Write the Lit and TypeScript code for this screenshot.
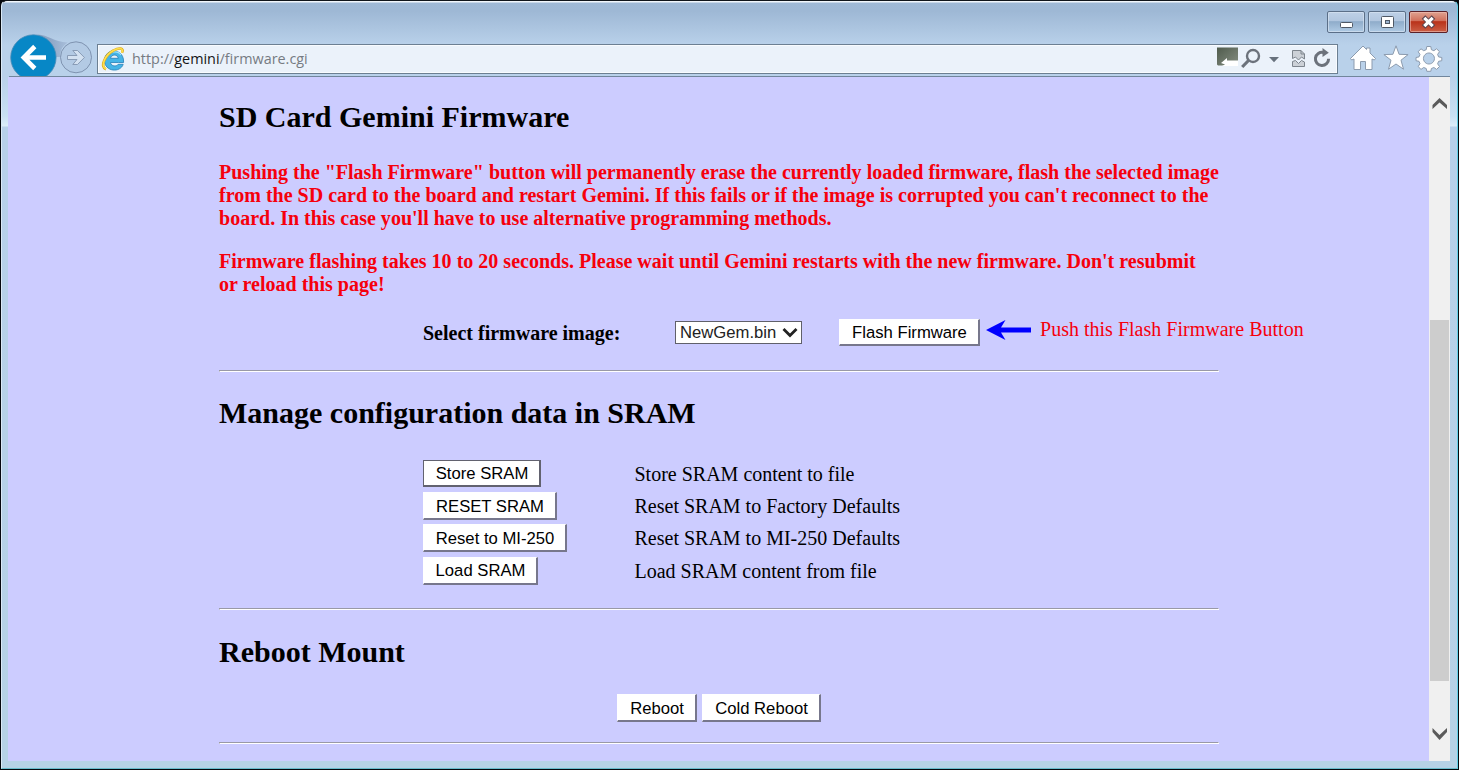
import { LitElement, html, css } from "lit";
import { customElement, property } from "lit/decorators.js";

@customElement("classic-button")
class ClassicButton extends LitElement {
  @property() label = "";
  @property({ type: Number }) width = 100;
  @property({ type: Boolean, reflect: true }) focused = false;
  @property({ type: Boolean, reflect: true }) tall = false;
  static styles = css`
    :host { display: block; height: 27px; }
    button { display: block; height: 27px; box-sizing: border-box; padding: 0 0 0 1px; margin: 0;
      font: 16.67px/23px "Liberation Sans", Arial, sans-serif; color: #000; background: #fff; border-radius: 0;
      border: 1px solid #fff; border-right: 2px solid #77778c; border-bottom: 2px solid #77778c; white-space: nowrap; }
    :host([tall]) button { height: 28px; padding-top: 1px; }
    :host([focused]) button { border-color: #62626f; }
  `;
  render() {
    return html`<button style="width:${this.width}px">${this.label}</button>`;
  }
}

@customElement("browser-chrome")
class BrowserChrome extends LitElement {
  static styles = css`
    :host { display: flex; flex-direction: column; height: 76px; box-sizing: border-box; flex: none; }
    .title { display: flex; justify-content: flex-end; height: 32px; padding: 9px 8px 0 0; box-sizing: border-box; flex: none; }
    .bar { display: flex; height: 43px; margin-left: 7px; margin-right: 7px; border-bottom: 1px solid #71869c; }
    .nav { display: block; width: 88px; height: 43px; flex: none; }
    .address { display: flex; align-items: center; width: 1241px; height: 30px; box-sizing: border-box; margin-top: 11px;
      background: #ebf2fa; border: 1px solid #6c7f92; outline: 0; flex: none; box-shadow: inset 0 0 0 1px #f8fbfe; }
    .ie { width: 24px; height: 24px; margin-left: 3px; flex: none; }
    .url { font: 14.4px/20px "Open Sans", sans-serif; color: #767b82; margin-left: 7px; flex: 1; white-space: pre; letter-spacing: 0; }
    .url b { font-weight: 400; color: #151515; }
    .tools { width: 120px; height: 28px; flex: none; }
    .cmds { width: 106px; height: 43px; flex: none; }
  `;
  render() {
    return html`
      <div class="title">
        <svg width="122" height="24" viewBox="-1 0 122 24">
          <defs>
            <linearGradient id="g" x1="0" y1="0" x2="0" y2="1"><stop offset="0" stop-color="#bfd1e7"/><stop offset=".46" stop-color="#b1c6df"/><stop offset=".48" stop-color="#8facca"/><stop offset="1" stop-color="#b1cce6"/></linearGradient>
            <linearGradient id="r" x1="0" y1="0" x2="0" y2="1"><stop offset="0" stop-color="#e0a493"/><stop offset=".46" stop-color="#d06e59"/><stop offset=".48" stop-color="#b9321a"/><stop offset="1" stop-color="#cc6148"/></linearGradient>
          </defs>
          <g transform="translate(-1 0)">
            <rect x=".5" y="1.5" width="37" height="21" rx="1.5" fill="url(#g)" stroke="#5b6f88"/>
            <rect x="1.5" y="2.5" width="35" height="19" rx="1" fill="none" stroke="#d5e3f1" stroke-opacity=".7"/>
            <rect x="41.500" y="1.500" width="37" height="21" rx="1.5" fill="url(#g)" stroke="#5b6f88"/>
            <rect x="42.500" y="2.500" width="35" height="19" rx="1" fill="none" stroke="#d5e3f1" stroke-opacity=".7"/>
            <rect x="13.500" y="12.500" width="12" height="5" rx="1" fill="#fff" stroke="#4f5865"/>
            <rect x="54.500" y="6.500" width="12" height="11" rx="1" fill="#fff" stroke="#4f5865"/>
            <rect x="58.500" y="10.500" width="4" height="3" fill="#9bb4d0" stroke="#4f5865"/>
          </g>
          <rect x="81.500" y="1.500" width="38" height="21" rx="1.5" fill="url(#r)" stroke="#5a2129"/>
          <rect x="82.500" y="2.500" width="36" height="19" rx="1" fill="none" stroke="#eec1b7" stroke-opacity=".6"/>
          <path d="M95.500 7 105.500 17M105.500 7 95.500 17" stroke="#5c4650" stroke-width="5"/>
          <path d="M96.300 7.800 104.700 16.200M104.700 7.800 96.300 16.200" stroke="#fff" stroke-width="3.200"/>
        </svg>
      </div>
      <div class="bar">
        <svg class="nav" viewBox="9 33 88 43">
          <defs><linearGradient id="w" x1="0" y1="0" x2="1" y2="0"><stop offset=".4" stop-color="#8ea6c6"/><stop offset="1" stop-color="#a9bfdb"/></linearGradient></defs>
          <path d="M38 34.500C48 35 53 41.500 68 42.500 62 46 60 51 60.500 57H55Z" fill="url(#w)"/>
          <circle cx="33.400" cy="57.500" r="22.700" fill="#0787c6" stroke="#4c8db8" stroke-width=".8"/>
          <path d="M46 57.500H24M34.800 46.500 23.800 57.500 34.800 68.500" fill="none" stroke="#fff" stroke-width="4.600"/>
          <circle cx="76" cy="57.300" r="15.500" fill="#b3cae4" stroke="#7f93b0"/>
          <path d="M67.500 55.500h9.500l-4.200-5h4.700l6.900 7-6.900 7h-4.700l4.200-5h-9.500z" fill="#d3e1f1" stroke="#8295b0" stroke-width=".9"/>
        </svg>
        <div class="address">
          <svg class="ie" viewBox="0 0 24 24">
            <path d="M17.500 15.500H9.500c.4 4 6.200 4.400 7.700 1.800h5C19.500 26 3.500 25 3.500 13.500 3.500.5 23.500.5 22.600 15.500zM9.500 11.300h7.800c-.6-4.300-7-4.300-7.800 0z" fill="#45b4e6" stroke="#267fb8" stroke-width=".8"/>
            <path d="M6.500 8.500c3-4.500 10.500-5 13.500-.5" fill="none" stroke="#9be3fa" stroke-width="1.200"/>
            <path d="M5 22.200C-1.500 20 4 8 12.500 3.500 18 .3 23.500.7 21 5.800" fill="none" stroke="#dca91c" stroke-width="2.600"/>
            <path d="M5 22C-1.200 19.500 4 8 12.500 3.500 18 .3 23 .7 20.800 5.800" fill="none" stroke="#fde04f" stroke-width="1.600"/>
          </svg>
          <span class="url">http://<b>gemini</b>/firmware.cgi</span>
          <svg class="tools" viewBox="1217 45 120 28">
            <defs><linearGradient id="d" x1="0" y1="0" x2="1" y2="1"><stop stop-color="#4f5b4c"/><stop offset="1" stop-color="#858e82"/></linearGradient></defs>
            <path d="M1217 47.500h21v18h-20l-1-1z" fill="url(#d)"/>
            <path d="M1221 63l6-5v2.500h11V66h-16l3-1.500z" fill="#fff"/>
            <circle cx="1253" cy="56" r="6" fill="none" stroke="#6c727b" stroke-width="2.400"/>
            <path d="m1248.500 60.500-6.300 6.500" stroke="#6c727b" stroke-width="3.200"/>
            <path d="M1269 57h10l-5 5.200z" fill="#67717c"/>
            <path d="M1292.500 58.500v-8h8.500l3.500 3.500v5l-3-2-3 3-3-3zM1292.500 66.500v-5l3-1 3 3 3-3 3 1.500v4.500z" fill="#ccd1d7" stroke="#7d858d" stroke-width="1"/>
            <path d="M1301 50.500v3.500h3.500" fill="none" stroke="#7d858d"/>
            <path d="M1323.500 52.500A6.600 6.600 0 1 0 1328.600 58.800" fill="none" stroke="#6c727b" stroke-width="3"/>
            <path d="M1322.500 48l6.300 4.800-6.300 4.200z" fill="#6c727b"/>
          </svg>
        </div>
        <svg class="cmds" viewBox="1338 33 106 43">
          <g fill="#fff" stroke="#8c9bae" stroke-width="1">
            <path d="M1350.500 58.500 1363 46l3.500 3.500V48h3.500v5l5.500 5.500-1.200 1.500-2.300-1v10.500h-6.500v-8h-5v8h-6.500V59l-2.300 1z"/>
            <path d="m1396 45.800 3.100 8.500 9 .3-7.100 5.600 2.500 9-7.500-5.200-7.500 5.200 2.500-9-7.100-5.600 9-.3z"/>
            <path fill-rule="evenodd" d="M1426.800 46.500h4l.6 3.200 2.500 1 2.700-1.900 2.900 2.900-1.900 2.700 1 2.500 3.200.6v3.200l-3.200.6-1 2.500 1.900 2.700-2.900 2.900-2.700-1.900-2.500 1-.6 2.800h-4l-.6-2.800-2.500-1-2.700 1.900-2.900-2.900 1.900-2.700-1-2.500-3-.6v-3.200l3-.6 1-2.500-1.900-2.700 2.900-2.900 2.700 1.900 2.500-1zM1428.900 53a5.500 5.500 0 1 0 .1 0z"/>
          </g>
        </svg>
      </div>`;
  }
}

@customElement("app-root")
class AppRoot extends LitElement {
  static styles = css`
    :host { display: block; width: 1459px; height: 770px; background: #05080d; overflow: hidden; }
    .window { display: flex; flex-direction: column; width: 1457px; height: 769px; margin-left: 1px; box-sizing: border-box;
      border-radius: 6px 6px 0 0; border-top: 1px solid #10151b; border-left: 1px solid #dae9f6; border-right: 1px solid #62d0e8; border-bottom: 1px solid #68bccc;
      background: linear-gradient(#f1f6fb 0 1px, #9fb9d6 2px, #9eb8d5 10px, #b9d1ea 44px, #b9d1ea 76px, #c8e0f3 115px, #dcedf9 125px, #b7d0ea 126px, #b6d2e6 100%); }
    .body { display: flex; height: 684px; margin: 0 7px 0 6px; flex: none; }
    .page { flex: 1; background: #ccccff; height: 684px; box-sizing: border-box; padding: 23px 0 0 211px;
      font: 20px/23px "Liberation Serif", "Times New Roman", serif; color: #000; overflow: hidden; }
    .scroll { width: 21px; background: #f0f0f0; display: flex; flex-direction: column; align-items: center; flex: none; }
    .scroll .up { height: 243px; } .scroll .down { height: 80px; }
    .thumb { width: 19px; height: 361px; background: #cdcdcd; }
    h2 { margin: 0; height: 34px; font: bold 30px/34px "Liberation Serif", "Times New Roman", serif; white-space: nowrap; }
    .sub { margin-top: 24px; } .last { margin-top: 25px; }
    .warn { color: #f6000c; font-weight: bold; white-space: nowrap; letter-spacing: .009px; }
    .w1 { margin-top: 27px; } .w2 { margin-top: 20px; }
    hr { margin: 0; width: 1000px; height: 2px; box-sizing: border-box; border: 1px solid #9999a6; border-right-color: #fff; border-bottom-color: #fff; }
    .flash { display: flex; height: 27px; margin: 23px 0 24px 204px; align-items: center; white-space: nowrap; }
    .lab { width: 252px; font-weight: bold; margin-top: 2px; }
    .sel { display: flex; align-items: center; width: 127px; height: 23px; box-sizing: border-box; border: 1px solid #60606a; background: #fff;
      font: 16.67px/21px "Liberation Sans", Arial, sans-serif; color: #222; padding-left: 4px; margin-right: 37px; }
    .sel span { width: 102px; }
    .arrow { margin: -6px 9px 0 6px; flex: none; }
    .push { color: #f6000c; margin-top: -7px; letter-spacing: .01px; }
    .sram { display: grid; grid-template-columns: 211.500px auto; grid-auto-rows: 32.200px; margin: 30px 0 0 204px; height: 148px; white-space: nowrap; }
    .desc { line-height: 27px; padding-top: 1px; box-sizing: border-box; }
    .boot { display: flex; gap: 5px; margin: 25px 0 21px 398px; }
  `;

  render() {
    const rows: [string, number, string][] = [
      ["Store SRAM", 118, "Store SRAM content to file"],
      ["RESET SRAM", 134, "Reset SRAM to Factory Defaults"],
      ["Reset to MI-250", 144, "Reset SRAM to MI-250 Defaults"],
      ["Load SRAM", 115, "Load SRAM content from file"],
    ];
    return html`<div class="window">
      <browser-chrome></browser-chrome>
      <div class="body">
        <div class="page">
          <h2>SD Card Gemini Firmware</h2>
          <div class="warn w1">
            <div>Pushing the "Flash Firmware" button will permanently erase the currently loaded firmware, flash the selected image</div>
            <div>from the SD card to the board and restart Gemini. If this fails or if the image is corrupted you can't reconnect to the</div>
            <div>board. In this case you'll have to use alternative programming methods.</div>
          </div>
          <div class="warn w2">
            <div>Firmware flashing takes 10 to 20 seconds. Please wait until Gemini restarts with the new firmware. Don't resubmit</div>
            <div>or reload this page!</div>
          </div>
          <div class="flash">
            <div class="lab">Select firmware image:</div>
            <div class="sel"><span>NewGem.bin</span><svg width="16" height="12" viewBox="0 0 16 12"><path d="M1.500 2 8 8.500 14.500 2" fill="none" stroke="#222" stroke-width="2.800"/></svg></div>
            <classic-button label="Flash Firmware" width="141"></classic-button>
            <svg class="arrow" width="45" height="20" viewBox="0 0 45 20"><path d="M0 10 19.500 0l-4.500 7.500H45v5H15L19.500 20z" fill="#00f"/></svg>
            <div class="push">Push this Flash Firmware Button</div>
          </div>
          <hr />
          <h2 class="sub">Manage configuration data in SRAM</h2>
          <div class="sram">
            ${rows.map((r, i) => html`<classic-button label=${r[0]} width=${r[1]} ?focused=${i === 0} ?tall=${i > 0}></classic-button><div class="desc">${r[2]}</div>`)}
          </div>
          <hr />
          <h2 class="last">Reboot Mount</h2>
          <div class="boot">
            <classic-button label="Reboot" width="80" tall></classic-button>
            <classic-button label="Cold Reboot" width="119" tall></classic-button>
          </div>
          <hr />
        </div>
        <div class="scroll">
          <svg class="up" width="21" height="243" viewBox="0 0 21 243"><path d="M3.500 32v-4L10.500 21 18 28v4l-7.500-6.500z" fill="#5a5a5a"/></svg>
          <div class="thumb"></div>
          <svg class="down" width="21" height="80" viewBox="0 0 21 80"><path d="M3.500 47v4L10.500 59 18 51V47l-7.500 7z" fill="#5a5a5a"/></svg>
        </div>
      </div>
    </div>`;
  }
}
